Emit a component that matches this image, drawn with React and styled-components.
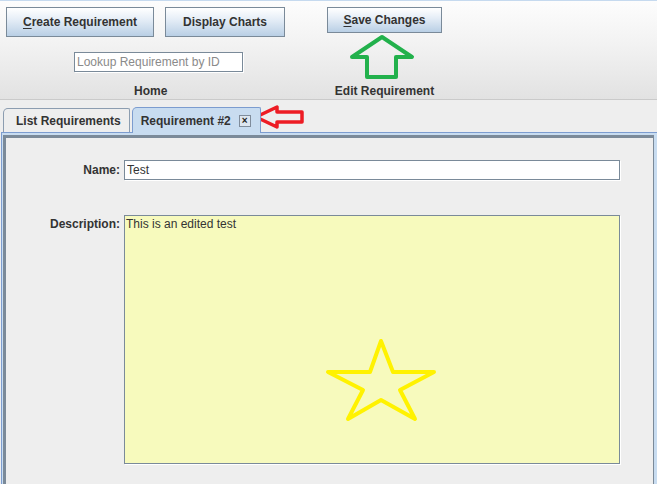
import React from 'react';
import styled, { createGlobalStyle } from 'styled-components';

const GlobalStyle = createGlobalStyle`
  html, body {
    margin: 0;
    padding: 0;
    background: #eeeeee;
  }
  * {
    box-sizing: border-box;
  }
`;

const Page = styled.div`
  width: 657px;
  height: 484px;
  display: flex;
  flex-direction: column;
  overflow: hidden;
  font-family: "Liberation Sans", Arial, sans-serif;
  color: #333333;
  background: #eeeeee;
`;

const Toolbar = styled.div`
  height: 100px;
  flex-shrink: 0;
  display: flex;
  align-items: flex-start;
  padding: 6px 0 0 6px;
  border-top: 1px solid #c6daef;
  border-bottom: 1px solid #cacaca;
  background: linear-gradient(to bottom, #fdfdfd 0%, #f2f2f2 45%, #e2e2e2 100%);
`;

const Group = styled.div`
  display: flex;
  flex-direction: column;
  align-items: ${props => (props.$center ? 'center' : 'flex-start')};
  margin-left: ${props => props.$offset || 0}px;
`;

const ButtonRow = styled.div`
  display: flex;
  gap: 11px;
`;

const Button = styled.button`
  width: ${props => props.$w}px;
  height: ${props => props.$h}px;
  padding: 0;
  font-family: "Liberation Sans", Arial, sans-serif;
  font-size: 12px;
  font-weight: 700;
  color: #333333;
  border: 1px solid #7a8a99;
  border-radius: 0;
  background: linear-gradient(to bottom, #ffffff 0%, #e6eef7 40%, #b9cfe5 100%);
  cursor: pointer;

  u {
    text-decoration: underline;
    text-underline-offset: 2px;
  }
`;

const LookupInput = styled.input`
  margin: 15px 0 0 68px;
  width: 169px;
  height: 20px;
  padding: 0 2px;
  font-family: "Liberation Sans", Arial, sans-serif;
  font-size: 12px;
  color: #333333;
  background: #ffffff;
  border: 1px solid #7a8a99;
  box-shadow: 1px 1px 0 #ffffff;
  outline: none;

  &::placeholder {
    color: #8a8a8a;
  }
`;

const Caption = styled.div`
  margin-top: ${props => props.$top}px;
  margin-left: ${props => props.$offset || 0}px;
  font-size: 12px;
  font-weight: 700;
  line-height: 14px;
  color: #333333;
`;

const ArrowSvg = styled.svg`
  display: block;
  flex-shrink: 0;
  margin: ${props => props.$margin};
`;

const TabStrip = styled.div`
  height: 32px;
  flex-shrink: 0;
  display: flex;
  align-items: flex-end;
  gap: 2px;
  padding-left: 3px;
`;

const Tab = styled.div`
  position: relative;
  z-index: 1;
  display: flex;
  align-items: center;
  gap: 8px;
  height: ${props => (props.$active ? 26 : 24)}px;
  margin-bottom: ${props => (props.$active ? -1 : 0)}px;
  padding: ${props => (props.$active ? '0 9px 0 8px' : '0 8px 0 12px')};
  font-size: 12px;
  font-weight: 700;
  color: #333333;
  background: ${props => (props.$active ? '#c8dcf0' : '#eeeeee')};
  border: 1px solid ${props => (props.$active ? '#7c9ccf' : '#8c9db0')};
  border-bottom: none;
  border-radius: 5px 2px 0 0;
  white-space: nowrap;
`;

const CloseBox = styled.span`
  width: 12px;
  height: 12px;
  display: flex;
  align-items: center;
  justify-content: center;
  font-size: 10px;
  font-weight: 700;
  line-height: 1;
  color: #222222;
  background: #dde6f0;
  border: 1px solid #7f8c9b;
`;

const Panel = styled.div`
  flex: 1;
  display: flex;
  margin-left: 1px;
  padding: 2px 3px 0 1px;
  background: #c8dcf0;
  border-top: 1px solid #7c9ccf;
  border-left: 1px solid #7c9ccf;
`;

const Frame = styled.div`
  flex: 1;
  background: #eeeeee;
  border-top: 3px solid #7b8a99;
  border-left: 3px solid #7b8a99;
  border-right: 1px solid #7b8a99;
`;

const Form = styled.div`
  display: grid;
  grid-template-columns: 114px 496px;
  column-gap: 4px;
  row-gap: 35px;
  padding-top: 22px;
`;

const Label = styled.div`
  text-align: right;
  font-size: 12px;
  font-weight: 700;
  line-height: 14px;
  color: #333333;
  align-self: ${props => (props.$top ? 'start' : 'center')};
  margin-top: ${props => (props.$top ? 2 : 0)}px;
`;

const TextField = styled.input`
  width: 100%;
  height: 20px;
  padding: 0 2px;
  font-family: "Liberation Sans", Arial, sans-serif;
  font-size: 12px;
  color: #333333;
  background: #ffffff;
  border: 1px solid #7a8a99;
  box-shadow: 1px 1px 0 #ffffff;
  outline: none;
`;

const DescBox = styled.div`
  position: relative;
  height: 249px;
`;

const DescArea = styled.textarea`
  display: block;
  width: 100%;
  height: 100%;
  margin: 0;
  padding: 1px 1px;
  resize: none;
  font-family: "Liberation Sans", Arial, sans-serif;
  font-size: 12px;
  line-height: 14px;
  color: #333333;
  background: #f7fabd;
  border: 1px solid #7a8a99;
  box-shadow: 1px 1px 0 #ffffff;
  outline: none;
`;

const Star = styled.svg`
  position: absolute;
  left: 200px;
  top: 120px;
  pointer-events: none;
`;

function App() {
  return (
    <Page>
      <GlobalStyle />
      <Toolbar>
        <Group>
          <ButtonRow>
            <Button $w={148} $h={30}><u>C</u>reate Requirement</Button>
            <Button $w={120} $h={30}>Display Charts</Button>
          </ButtonRow>
          <LookupInput placeholder="Lookup Requirement by ID" />
          <Caption $top={12} $offset={128}>Home</Caption>
        </Group>
        <Group $center $offset={42}>
          <Button $w={115} $h={26}><u>S</u>ave Changes</Button>
          <ArrowSvg width="66" height="48" viewBox="0 0 66 48" $margin="1px 0 0 -3px">
            <polygon
              points="32,3 62,23 46,23 46,43 17,43 17,23 2,23"
              fill="none"
              stroke="#22b14c"
              strokeWidth="4"
              strokeLinejoin="round"
            />
          </ArrowSvg>
          <Caption $top={2}>Edit Requirement</Caption>
        </Group>
      </Toolbar>

      <TabStrip>
        <Tab>List Requirements</Tab>
        <Tab $active>
          Requirement #2
          <CloseBox>×</CloseBox>
        </Tab>
        <ArrowSvg width="54" height="26" viewBox="0 0 54 26" $margin="0 0 2px -11px">
          <polygon
            points="4,13 25,3 25,8 50,8 50,18 25,18 25,23"
            fill="none"
            stroke="#ed1c24"
            strokeWidth="3.5"
            strokeLinejoin="round"
          />
        </ArrowSvg>
      </TabStrip>

      <Panel>
        <Frame>
          <Form>
            <Label>Name:</Label>
            <TextField defaultValue="Test" readOnly />
            <Label $top>Description:</Label>
            <DescBox>
              <DescArea defaultValue="This is an edited test" readOnly />
              <Star width="116" height="90" viewBox="0 0 116 90">
                <polygon
                  points="57,6 69,37 110,37 76,55 91,84 57,65 24,84 39,55 4,37 46,37"
                  fill="none"
                  stroke="#fff200"
                  strokeWidth="4"
                  strokeLinejoin="round"
                />
              </Star>
            </DescBox>
          </Form>
        </Frame>
      </Panel>
    </Page>
  );
}

export default App;
